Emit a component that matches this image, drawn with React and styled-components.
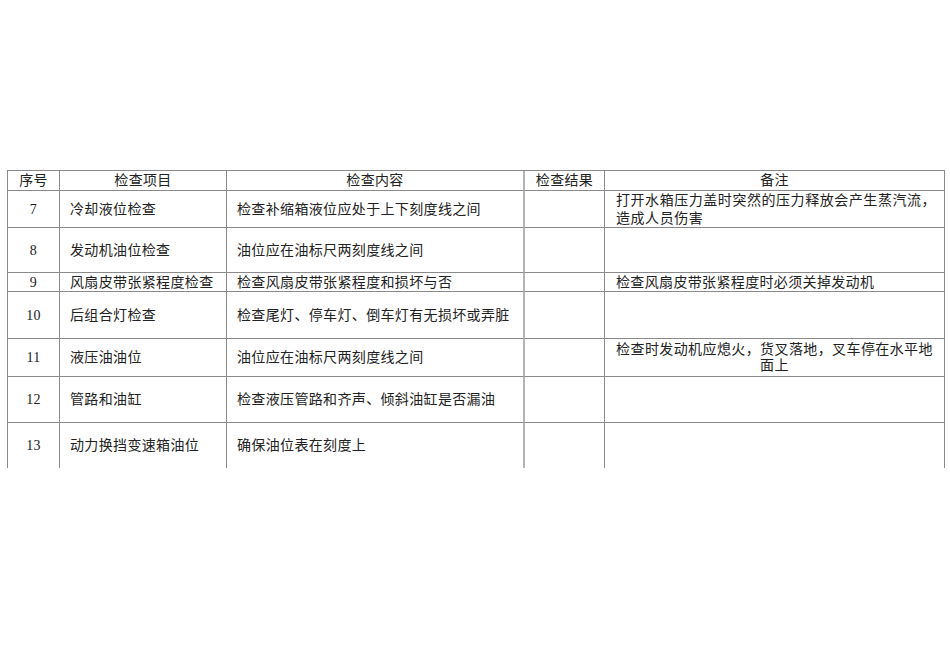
import React from "react";
import styled, { createGlobalStyle } from "styled-components";

const Global = createGlobalStyle`
  html, body { margin: 0; padding: 0; background: #fff; }
  body { font-family: "Liberation Serif", "Noto Sans CJK SC", serif; color: #222; }
`;

const Page = styled.div`
  padding: 170px 0 0 7px;
`;

const Grid = styled.div`
  display: grid;
  grid-template-columns: 52px 167px 298px 80px 340px;
  grid-template-rows: 20px 37px 45px 19px 47px 38px 46px 45px;
  width: 938px;
  box-sizing: border-box;
  border-left: 1px solid #8a8a8a;
  border-top: 1px solid #8a8a8a;
  font-size: 14px;
  line-height: 17px;
  letter-spacing: 0.35px;
`;

const Cell = styled.div`
  box-sizing: border-box;
  display: flex;
  flex-direction: column;
  justify-content: ${(p) => (p.$valign === "top" ? "flex-start" : "center")};
  align-items: ${(p) => (p.$align === "left" ? "flex-start" : "center")};
  text-align: ${(p) => p.$align || "center"};
  padding-left: ${(p) => (p.$align === "left" ? p.$pl || 10 : 0)}px;
  border-right: ${(p) => (p.$light ? "2px solid #b4b4b4" : "1px solid #8a8a8a")};
  border-bottom: ${(p) => (p.$open ? "none" : "1px solid #8a8a8a")};
  white-space: nowrap;
  overflow: hidden;
`;

const Note = styled.div`
  padding-top: ${(p) => p.$pt || 0}px;
  letter-spacing: ${(p) => p.$ls}px;
  line-height: ${(p) => p.$lh || 17}px;
`;

const rows = [
  { n: "7", item: "冷却液位检查", content: "检查补缩箱液位应处于上下刻度线之间", note: { lines: ["打开水箱压力盖时突然的压力释放会产生蒸汽流，", "造成人员伤害"], align: "left", valign: "top", ls: 0.55, pt: 1, lh: 18 } },
  { n: "8", item: "发动机油位检查", content: "油位应在油标尺两刻度线之间" },
  { n: "9", item: "风扇皮带张紧程度检查", content: "检查风扇皮带张紧程度和损坏与否", note: { lines: ["检查风扇皮带张紧程度时必须关掉发动机"], align: "left", valign: "middle", ls: 0.35, pt: 0 } },
  { n: "10", item: "后组合灯检查", content: "检查尾灯、停车灯、倒车灯有无损坏或弄脏" },
  { n: "11", item: "液压油油位", content: "油位应在油标尺两刻度线之间", note: { lines: ["检查时发动机应熄火，货叉落地，叉车停在水平地", "面上"], align: "center", valign: "top", ls: 0.4, pt: 3, lh: 16 } },
  { n: "12", item: "管路和油缸", content: "检查液压管路和齐声、倾斜油缸是否漏油" },
  { n: "13", item: "动力换挡变速箱油位", content: "确保油位表在刻度上", open: true },
];

export default function App() {
  return (
    <Page>
      <Global />
      <Grid>
        <Cell>序号</Cell>
        <Cell>检查项目</Cell>
        <Cell $light>检查内容</Cell>
        <Cell>检查结果</Cell>
        <Cell>备注</Cell>
        {rows.map((r) => (
          <React.Fragment key={r.n}>
            <Cell $open={r.open}>{r.n}</Cell>
            <Cell $open={r.open} $align="left" $pl={10}>{r.item}</Cell>
            <Cell $open={r.open} $align="left" $pl={10} $light>{r.content}</Cell>
            <Cell $open={r.open} />
            <Cell
              $open={r.open}
              $align={r.note ? r.note.align : "left"}
              $valign={r.note ? r.note.valign : "middle"}
              $pl={11}
            >
              {r.note && (
                <Note $pt={r.note.pt} $ls={r.note.ls} $lh={r.note.lh}>
                  {r.note.lines.map((l, i) => (
                    <React.Fragment key={i}>
                      {i > 0 && <br />}
                      {l}
                    </React.Fragment>
                  ))}
                </Note>
              )}
            </Cell>
          </React.Fragment>
        ))}
      </Grid>
    </Page>
  );
}
